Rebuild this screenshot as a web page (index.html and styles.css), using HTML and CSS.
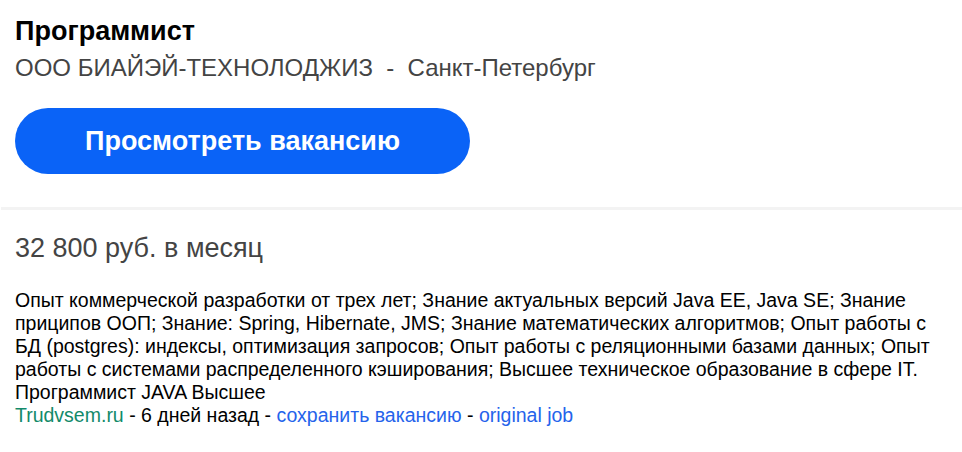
FILE: index.html
```html
<!DOCTYPE html>
<html lang="ru">
<head>
<meta charset="utf-8">
<link rel="stylesheet" href="styles.css">
</head>
<body>
<div class="card">
  <header class="head">
    <h1 class="title">Программист</h1>
    <div class="company">ООО БИАЙЭЙ-ТЕХНОЛОДЖИЗ&nbsp; - &nbsp;Санкт-Петербург</div>
    <a class="btn" href="#">Просмотреть вакансию</a>
  </header>
  <div class="sep"></div>
  <section class="body">
    <div class="salary">32 800 руб. в месяц</div>
    <p class="desc">Опыт коммерческой разработки от трех лет; Знание актуальных версий Java EE, Java SE; Знание приципов ООП; Знание: Spring, Hibernate, JMS; Знание математических алгоритмов; Опыт работы с БД (postgres): индексы, оптимизация запросов; Опыт работы с реляционными базами данных; Опыт работы с системами распределенного кэширования; Высшее техническое образование в сфере IT. Программист JAVA Высшее<br><span class="src">Trudvsem.ru</span> - 6 дней назад - <a class="lnk" href="#">сохранить вакансию</a> - <a class="lnk" href="#">original job</a></p>
  </section>
</div>
</body>
</html>
```
FILE: styles.css
```css
html, body { margin: 0; padding: 0; background: #fff; }
body { font-family: "Liberation Sans", Arial, sans-serif; color: #000; }
.head { padding: 15px 15px 33px 15px; }
.title { margin: 0; font-size: 27px; font-weight: bold; line-height: 32px; color: #000; }
.company { margin-top: 7px; font-size: 24px; line-height: 28px; color: #444; }
.btn {
  display: flex; align-items: center; justify-content: center;
  margin-top: 26px; width: 455px; height: 66px; border-radius: 33px;
  background: #0a63f7; color: #fff; font-size: 27px; font-weight: bold;
  text-decoration: none;
}
.sep { height: 3px; background: #f3f3f3; margin-left: 1px; }
.body { padding: 22px 15px 0 15px; }
.salary { font-size: 27px; line-height: 32px; color: #444; }
.desc { margin: 25px 0 0 0; font-size: 19.5px; line-height: 23px; color: #000; max-width: 930px; }
.src { color: #138a6a; }
.lnk { color: #2563eb; text-decoration: none; }
```
